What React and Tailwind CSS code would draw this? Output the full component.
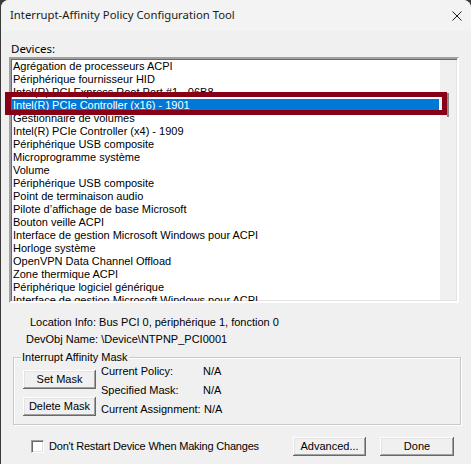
import React from "react";

const devices = [
  "Agrégation de processeurs ACPI",
  "Périphérique fournisseur HID",
  "Intel(R) PCI Express Root Port #1 - 06B8",
  "Intel(R) PCIe Controller (x16) - 1901",
  "Gestionnaire de volumes",
  "Intel(R) PCIe Controller (x4) - 1909",
  "Périphérique USB composite",
  "Microprogramme système",
  "Volume",
  "Périphérique USB composite",
  "Point de terminaison audio",
  "Pilote d’affichage de base Microsoft",
  "Bouton veille ACPI",
  "Interface de gestion Microsoft Windows pour ACPI",
  "Horloge système",
  "OpenVPN Data Channel Offload",
  "Zone thermique ACPI",
  "Périphérique logiciel générique",
  "Interface de gestion Microsoft Windows pour ACPI",
];

const SELECTED = 3;

const sans = "font-['Liberation_Sans',Arial,sans-serif] text-[11px] leading-[13px]";

const Button = ({ children, className = "" }) => (
  <button
    className={`${sans} h-[19px] w-[73px] bg-[#f0f0f0] text-black shadow-[inset_-1px_-1px_0_#696969,inset_1px_1px_0_#ffffff,inset_-2px_-2px_0_#a0a0a0,inset_2px_2px_0_#e3e3e3] ${className}`}
  >
    {children}
  </button>
);

export default function App() {
  return (
    <div className="w-[471px] h-[464px] bg-[#3a3a3a] overflow-hidden">
      <div className="ml-px h-full rounded-t-[8px] bg-[#f0f0f0] overflow-hidden flex flex-col">
        {/* title bar */}
        <div className="h-[31px] bg-[#f3f3f3] flex items-center justify-between pl-[9px] pr-[10px] shrink-0">
          <span className="font-['Noto_Sans',sans-serif] text-[11.3px] text-[#1a1a1a]">
            Interrupt-Affinity Policy Configuration Tool
          </span>
          <svg width="10" height="10" viewBox="0 0 10 10" className="mr-[-1px]">
            <path d="M0.5 0.5 L9.5 9.5 M9.5 0.5 L0.5 9.5" stroke="#1a1a1a" strokeWidth="1" />
          </svg>
        </div>

        <div className="font-['Noto_Sans',sans-serif] text-[11.5px] leading-[14px] text-black mt-[11px] ml-[10px] h-[14px]">
          Devices:
        </div>

        {/* device list */}
        <div className="relative mt-px ml-[8px] w-[450px] h-[246px] shrink-0">
          <div className="h-full w-full border-2 border-t-[#a0a0a0] border-l-[#a0a0a0] border-b-[#ffffff] border-r-[#ffffff] shadow-[inset_1px_1px_0_#696969,inset_-1px_-1px_0_#e3e3e3] bg-white flex overflow-hidden">
            <div className={`flex-1 pt-px ${sans} text-black`}>
              {devices.map((d, i) => (
                <div
                  key={i}
                  className={`h-[13px] pl-[2px] whitespace-nowrap ${
                    i === SELECTED ? "bg-[#0078d7] text-white mr-px" : ""
                  }`}
                >
                  {d}
                </div>
              ))}
            </div>
            <div className="w-[16px] bg-[#f0f0f0] mt-px mb-px mr-px relative">
              <div className="absolute left-[7px] top-[33px] w-[2px] h-[24px] bg-[#8a8a8a]" />
            </div>
          </div>
          {/* highlight box drawn over the selected row */}
          <div className="absolute left-[-4px] top-[35px] w-[442px] h-[23px] border-[5px] border-l-[6px] border-[#880015]" />
        </div>

        <div className={`${sans} text-black mt-[13px] ml-[29px]`}>
          Location Info: Bus PCI 0, périphérique 1, fonction 0
        </div>
        <div className={`${sans} text-black mt-[4px] ml-[25px]`}>
          DevObj Name: \Device\NTPNP_PCI0001
        </div>

        {/* mask group */}
        <div className="relative mt-[11px] ml-[12px] w-[448px] h-[68px] border border-[#c8c8c8] shadow-[1px_1px_0_#ffffff,inset_1px_1px_0_#ffffff] shrink-0">
          <span className={`absolute left-[7px] top-[-7px] px-px bg-[#f0f0f0] ${sans} text-black`}>
            Interrupt Affinity Mask
          </span>
          <div className="flex pl-[9px]">
            <div className="flex flex-col gap-[8px] pt-[12px]">
              <Button>Set Mask</Button>
              <Button>Delete Mask</Button>
            </div>
            <div className={`grid grid-cols-[102px_auto] auto-rows-[19px] items-center pt-[4px] pl-[5px] ${sans} text-black`}>
              <span>Current Policy:</span>
              <span>N/A</span>
              <span>Specified Mask:</span>
              <span>N/A</span>
              <span>Current Assignment:</span>
              <span className="pl-px">N/A</span>
            </div>
          </div>
        </div>

        {/* footer */}
        <div className="flex items-center mt-[12px] h-[19px]">
          <div className="ml-[30px] w-[13px] h-[13px] bg-white border border-t-[#a0a0a0] border-l-[#a0a0a0] border-b-white border-r-white shadow-[inset_1px_1px_0_#696969,inset_-1px_-1px_0_#e3e3e3]" />
          <span className={`ml-[5px] tracking-[-0.2px] ${sans} text-black`}>
            Don't Restart Device When Making Changes
          </span>
          <Button className="ml-auto">Advanced...</Button>
          <Button className="ml-[14px] w-[74px] mr-[17px]">Done</Button>
        </div>
      </div>
    </div>
  );
}
